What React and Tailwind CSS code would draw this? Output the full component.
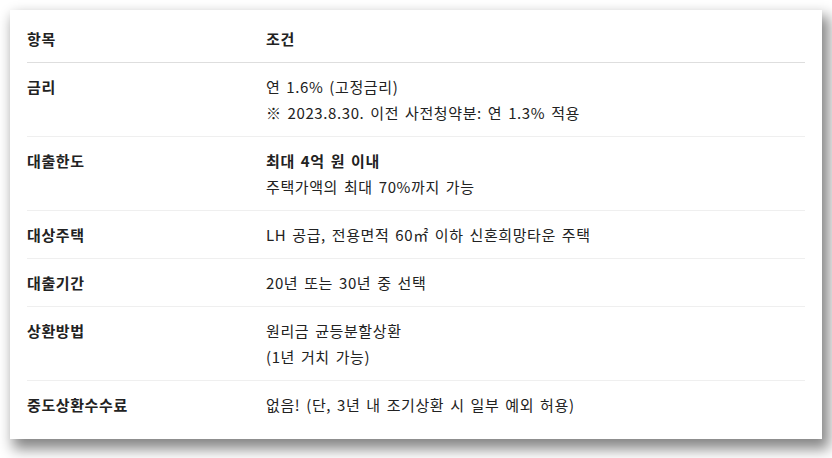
const rows = [
  { label: "금리", lines: ["연 1.6% (고정금리)", "※ 2023.8.30. 이전 사전청약분: 연 1.3% 적용"] },
  { label: "대출한도", lines: ["최대 4억 원 이내", "주택가액의 최대 70%까지 가능"], boldFirst: true },
  { label: "대상주택", lines: ["LH 공급, 전용면적 60㎡ 이하 신혼희망타운 주택"] },
  { label: "대출기간", lines: ["20년 또는 30년 중 선택"] },
  { label: "상환방법", lines: ["원리금 균등분할상환", "(1년 거치 가능)"] },
  { label: "중도상환수수료", lines: ["없음! (단, 3년 내 조기상환 시 일부 예외 허용)"] },
];

function App() {
  return (
    <div
      className="w-[832px] h-[458px] bg-white pt-[10px] pl-[10px] text-[#222] tracking-[0.6px] [word-spacing:2px]"
      style={{ fontFamily: '"Noto Sans CJK KR", "Noto Sans", sans-serif' }}
    >
      <div className="w-[812px] h-[429px] bg-white px-[17px] pt-[5px] shadow-[5px_8px_13px_2px_rgba(0,0,0,0.48)]">
        <div className="flex border-b border-[#dedede] text-[15px] font-bold leading-[26px] pt-[11px] pb-[10px]">
          <div className="w-[239px] shrink-0">항목</div>
          <div>조건</div>
        </div>
        {rows.map((r, i) => (
          <div
            key={r.label}
            className={
              "flex text-[15px] leading-[26px] pt-[11px] pb-[10px] " +
              (i < rows.length - 1 ? "border-b border-[#efefef]" : "")
            }
          >
            <div className="w-[239px] shrink-0 font-bold">{r.label}</div>
            <div>
              {r.lines.map((l, j) => (
                <div key={j} className={r.boldFirst && j === 0 ? "font-bold" : ""}>
                  {l}
                </div>
              ))}
            </div>
          </div>
        ))}
      </div>
    </div>
  );
}

export default App;
